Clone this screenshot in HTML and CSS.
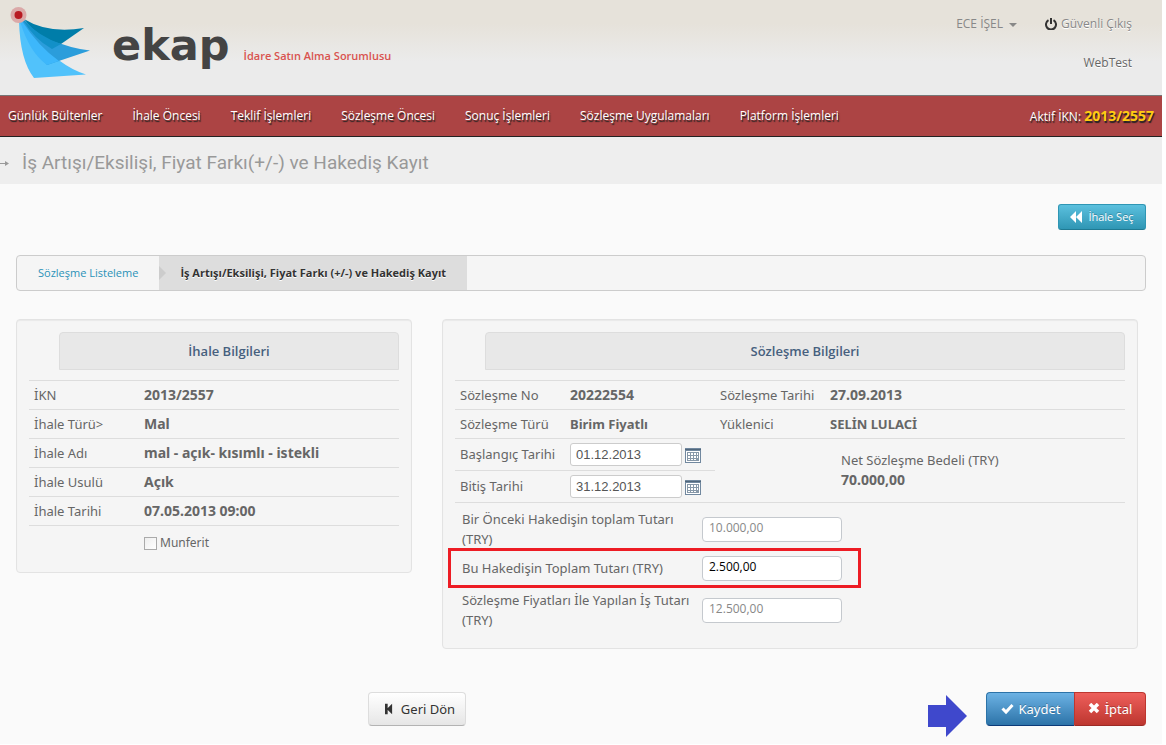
FILE: index.html
```html
<!DOCTYPE html>
<html lang="tr">
<head>
<meta charset="utf-8">
<title>EKAP</title>
<link rel="stylesheet" href="styles.css">
</head>
<body>
<div class="page">
  <header class="header">
    <div class="brand">
      <svg class="brand-mark" width="84" height="76" viewBox="8 4 84 76" aria-hidden="true">
        <path d="M19 21Q20 60 34 78L86 74.500Q72 70 60 61Q38 46 22 21Z" fill="#51c2fb"/>
        <path d="M21 21Q33 50 47 65L90 50.500Q50 46 24 20Z" fill="#2b9ddb"/>
        <path d="M20 21Q29 52 47 65L59 61Q38 46 22 21Z" fill="#3db7fb"/>
        <path d="M24 19Q48 34 84 28L61 44Q38 38 24 19Z" fill="#007da9"/>
        <path d="M23 20Q34 39 52 49L61 44Q38 36 24 20Z" fill="#1290c8"/>
        <circle cx="18.500" cy="15" r="8" fill="#dba9a8"/>
        <circle cx="18.500" cy="15" r="4" fill="#b81a22"/>
      </svg>
      <span class="brand-name">ekap</span>
      <span class="brand-role">İdare Satın Alma Sorumlusu</span>
    </div>
    <div class="account">
      <div class="account-row">
        <button class="user-menu" type="button">ECE İŞEL <span class="caret"></span></button>
        <a class="logout" href="#"><svg width="12" height="12" viewBox="0 0 12 12" aria-hidden="true"><path d="M3.500 2.200A5 5 0 1 0 8.500 2.200M6 0v6" fill="none" stroke="#333" stroke-width="2"/></svg>Güvenli Çıkış</a>
      </div>
      <div class="environment">WebTest</div>
    </div>
  </header>
  <nav class="nav">
    <a href="#">Günlük Bültenler</a><a href="#">İhale Öncesi</a><a href="#">Teklif İşlemleri</a><a href="#">Sözleşme Öncesi</a><a href="#">Sonuç İşlemleri</a><a href="#">Sözleşme Uygulamaları</a><a href="#">Platform İşlemleri</a>
    <span class="active-ikn">Aktif İKN: <b>2013/2557</b></span>
  </nav>
  <div class="titlebar">
    <svg width="9" height="7" viewBox="0 0 9 7" aria-hidden="true"><path d="M0 3.500h7" stroke="#999"/><path d="M5 1l4 2.500L5 6z" fill="#999"/></svg>
    <h1>İş Artışı/Eksilişi, Fiyat Farkı(+/-) ve Hakediş Kayıt</h1>
  </div>
  <main class="main">
    <div class="toolbar">
      <button class="btn btn-info" type="button"><svg width="12" height="12" viewBox="0 0 12 12" aria-hidden="true"><path d="M6 0v12L0 6zM12 0v12L6 6z" fill="#fff"/></svg>İhale Seç</button>
    </div>
    <nav class="steps" aria-label="Adımlar">
      <a href="#">Sözleşme Listeleme</a>
      <strong>İş Artışı/Eksilişi, Fiyat Farkı (+/-) ve Hakediş Kayıt</strong>
    </nav>
    <div class="panels">
      <section class="panel tender">
        <h2>İhale Bilgileri</h2>
        <dl class="rows">
          <div><dt>İKN</dt><dd>2013/2557</dd></div>
          <div><dt>İhale Türü&gt;</dt><dd>Mal</dd></div>
          <div><dt>İhale Adı</dt><dd>mal - açık- kısımlı - istekli</dd></div>
          <div><dt>İhale Usulü</dt><dd>Açık</dd></div>
          <div><dt>İhale Tarihi</dt><dd>07.05.2013 09:00</dd></div>
        </dl>
        <label class="check"><input type="checkbox">Munferit</label>
      </section>
      <section class="panel contract">
        <h2>Sözleşme Bilgileri</h2>
        <dl class="rows pairs">
          <div><dt>Sözleşme No</dt><dd>20222554</dd><dt>Sözleşme Tarihi</dt><dd>27.09.2013</dd></div>
          <div><dt>Sözleşme Türü</dt><dd class="name">Birim Fiyatlı</dd><dt>Yüklenici</dt><dd class="name">SELİN LULACİ</dd></div>
        </dl>
        <div class="period">
          <div class="dates">
            <div class="date-row"><label for="start">Başlangıç Tarihi</label><input id="start" type="text" value="01.12.2013"><button class="calendar" type="button" aria-label="Başlangıç tarihi seç"><svg width="16" height="15" viewBox="0 0 16 15"><path d="M0 0h16v15H0z" fill="#71889f"/><path d="M1 3h14v11H1z" fill="#fff"/><path d="M0 1h16v1H0z" fill="#51677c"/><path d="M2 4h12v9H2z" fill="#8798a8"/><path d="M3 5h2v2H3zM6 5h2v2H6zM9 5h2v2H9zM12 5h1v2h-1zM3 8h2v2H3zM6 8h2v2H6zM9 8h2v2H9zM12 8h1v2h-1zM3 11h2v1H3zM6 11h2v1H6zM9 11h2v1H9z" fill="#fff"/></svg></button></div>
            <div class="date-row"><label for="end">Bitiş Tarihi</label><input id="end" type="text" value="31.12.2013"><button class="calendar" type="button" aria-label="Bitiş tarihi seç"><svg width="16" height="15" viewBox="0 0 16 15"><path d="M0 0h16v15H0z" fill="#71889f"/><path d="M1 3h14v11H1z" fill="#fff"/><path d="M0 1h16v1H0z" fill="#51677c"/><path d="M2 4h12v9H2z" fill="#8798a8"/><path d="M3 5h2v2H3zM6 5h2v2H6zM9 5h2v2H9zM12 5h1v2h-1zM3 8h2v2H3zM6 8h2v2H6zM9 8h2v2H9zM12 8h1v2h-1zM3 11h2v1H3zM6 11h2v1H6zM9 11h2v1H9z" fill="#fff"/></svg></button></div>
          </div>
          <div class="net">Net Sözleşme Bedeli (TRY)<b>70.000,00</b></div>
        </div>
        <div class="amounts">
          <div class="amount"><label for="previous">Bir Önceki Hakedişin toplam Tutarı (TRY)</label><input id="previous" type="text" value="10.000,00" readonly></div>
          <div class="amount current"><label for="current">Bu Hakedişin Toplam Tutarı (TRY)</label><input id="current" type="text" value="2.500,00"></div>
          <div class="amount"><label for="total">Sözleşme Fiyatları İle Yapılan İş Tutarı (TRY)</label><input id="total" type="text" value="12.500,00" readonly></div>
        </div>
      </section>
    </div>
    <div class="actions">
      <button class="btn btn-back" type="button"><svg width="8" height="12" viewBox="0 0 9 12" aria-hidden="true"><path d="M0 0h3v12H0zM8 0v12L2 6z" fill="#333"/></svg>Geri Dön</button>
      <svg class="pointer" width="39" height="42" viewBox="0 0 39 42" aria-hidden="true"><path d="M0 10h18V0l21 21-21 21V32H0z" fill="#3f48cc"/></svg>
      <div class="submit">
        <button class="btn btn-save" type="button"><svg width="13" height="12" viewBox="0 0 13 12" aria-hidden="true"><path d="M1.500 5.500l3.500 3.500 6.500-7" fill="none" stroke="#fff" stroke-width="3"/></svg>Kaydet</button><button class="btn btn-cancel" type="button"><svg width="12" height="12" viewBox="0 0 12 12" aria-hidden="true"><path d="M2 1l8 8M10 1L2 9" stroke="#fff" stroke-width="3.500"/></svg>İptal</button>
      </div>
    </div>
  </main>
</div>
</body>
</html>
```
FILE: styles.css
```css
* { box-sizing: border-box; }
body { margin: 0; background: #fff; color: #666; font: 13px/20px "Noto Sans", "Open Sans", sans-serif; }
button, input { font: inherit; color: inherit; margin: 0; }
a { color: inherit; text-decoration: none; }
h1, h2, dl, dd { margin: 0; }
.page { margin: 0 4px 1px 0; background: #fafafa; }

.header { display: flex; justify-content: space-between; height: 95px; background: linear-gradient(#e6e2da, #e6e2da 25%, #ebebeb 65%); }
.brand { display: flex; padding: 4px 0 0 8px; }
.brand-name { margin-left: 20px; font: bold 43px/50px "DejaVu Sans", sans-serif; color: #444; padding-top: 16px; }
.brand-role { margin: 42px 0 0 14px; font: 600 11px/20px "Open Sans", sans-serif; color: #d9534f; }
.account { padding: 14px 30px 0 0; font: 12px/20px "Open Sans", sans-serif; color: #888; text-shadow: 0 1px #fff; text-align: right; }
.account-row { display: flex; gap: 28px; }
.user-menu { display: flex; align-items: center; gap: 6px; padding: 0; border: 0; background: none; }
.caret { border: 4px solid transparent; border-top-color: #888; border-bottom: 0; margin-top: 2px; }
.logout { display: flex; align-items: center; gap: 4px; }
.environment { margin-top: 19px; color: #666; }

.nav { display: flex; align-items: center; gap: 30px; height: 42px; padding: 0 8px; background: #ac4444; border-top: 1px solid #777; border-bottom: 1px solid #222; color: #fff; font: 500 12px/20px "Open Sans", sans-serif; text-shadow: 1px 2px 1px #222; white-space: nowrap; }
.active-ikn { margin-left: auto; }
.active-ikn b { color: #fc1; font-size: 14px; }

.titlebar { display: flex; align-items: center; gap: 13px; height: 47px; padding-top: 5px; background: #eee; color: #999; }
.titlebar h1 { font: 19px/30px Roboto, sans-serif; }

.main { padding: 20px 16px 7px; }
.toolbar { display: flex; justify-content: flex-end; }
.btn { display: inline-flex; align-items: center; justify-content: center; border: 1px solid; border-radius: 4px; white-space: nowrap; }
.btn-info { gap: 6px; width: 88px; height: 26px; font: 500 11px/18px "Open Sans", sans-serif; color: #fff; text-shadow: 0 -1px rgba(0,0,0,.25); background: linear-gradient(#5bc0de, #2f96b4); border-color: #2f96b4 #2f96b4 #1f7a93; border-radius: 3px; }
.steps { display: flex; height: 36px; margin-top: 25px; background: #f5f5f5; border: 1px solid #ccc; border-radius: 4px; overflow: hidden; font: 11px/34px "Open Sans", sans-serif; }
.steps a { padding: 0 21px; color: #2a92b8; }
.steps strong { position: relative; padding: 0 21px; background: #ddd; color: #333; text-shadow: 0 1px #fff; }
.steps strong::before { content: ""; position: absolute; left: 0; top: 10px; border: 7px solid transparent; border-left-color: #ccc; border-right: 0; }

.panels { display: grid; grid-template-columns: 396fr 696fr; gap: 30px; align-items: start; margin: 28px 8px 0 0; }
.panel { background: #f5f5f5; border: 1px solid #e3e3e3; border-radius: 4px; box-shadow: inset 0 1px 1px rgba(0,0,0,.05); padding: 12px 12px 19px; }
.panel h2 { margin: 0 0 10px 30px; height: 38px; border: 1px solid #ddd; border-radius: 4px 4px 0 0; background: #e8e8e8; color: #46607e; font: 600 13px/36px "Open Sans", sans-serif; text-align: center; }
.rows > div { display: grid; grid-template-columns: 110px 1fr; height: 29px; padding: 4px 5px; border-top: 1px solid #ddd; }
.rows dd { font-weight: bold; font-size: 14px; }
.rows .name { font-size: 13px; }
.tender .rows { border-bottom: 1px solid #ddd; }
.pairs > div { grid-template-columns: 110px 150px 110px 1fr; }
.check { display: flex; align-items: center; gap: 3px; margin: 7px 0 0 115px; font-size: 12px; }
.check input { appearance: none; width: 13px; height: 13px; border: 1px solid #aaa; background: linear-gradient(135deg, #eee, #fff); }
.period { display: flex; border-top: 1px solid #ddd; border-bottom: 1px solid #ddd; }
.dates { width: 260px; }
.date-row { display: flex; align-items: center; height: 31px; padding: 0 5px; }
.date-row + .date-row { height: 32px; border-top: 1px solid #ddd; }
.date-row label { width: 110px; padding-bottom: 2px; }
.date-row input { width: 112px; height: 23px; padding: 0 5px; font: 13px/20px "Liberation Sans", sans-serif; color: #555; }
.contract input { background: #fff; border: 1px solid #ccc; border-radius: 3px; }
.calendar { display: flex; margin: 2px 0 0 3px; padding: 0; border: 0; background: none; }
.net { margin: 11px 0 0 126px; }
.net b { display: block; font-size: 14px; }
.contract { padding-bottom: 18px; }
.amounts { padding: 6px 0 0; }
.amount { display: flex; align-items: center; min-height: 40px; padding-left: 7px; }
.amount label { width: 240px; padding-right: 8px; }
.contract .amount input { width: 140px; height: 25px; padding: 0 6px 4px; border-color: #c5c9ce; border-radius: 4px; color: #888; font: 12px/18px "Open Sans", sans-serif; }
.contract .current input { color: #000; }
.current { width: 413px; margin: -1px 0 2px -7px; border: 3px solid #ed1c24; padding-left: 11px; }

.actions { display: flex; align-items: center; margin-top: 32px; }
.actions .btn { height: 34px; font-size: 13px; }
.btn-back { width: 98px; margin-left: 352px; padding: 0 4px 0 10px; gap: 8px; color: #333; background: linear-gradient(#fff, #e6e6e6); border-color: #ddd #ddd #b3b3b3; }
.pointer { margin: 14px 19px 0 auto; }
.submit { display: flex; }
.submit .btn { color: #fff; text-shadow: 0 -1px rgba(0,0,0,.25); gap: 5px; }
.actions .btn-save { width: 88px; background: linear-gradient(#6cb2e4, #2c73a8); border-color: #2c73a8 #2c73a8 #0c3a78; border-right: 0; border-radius: 4px 0 0 4px; }
.actions .btn-cancel { width: 72px; background: linear-gradient(#ee5f5b, #bd362f); border-color: #bd362f #bd362f #9b2a25; border-radius: 0 4px 4px 0; }
```
